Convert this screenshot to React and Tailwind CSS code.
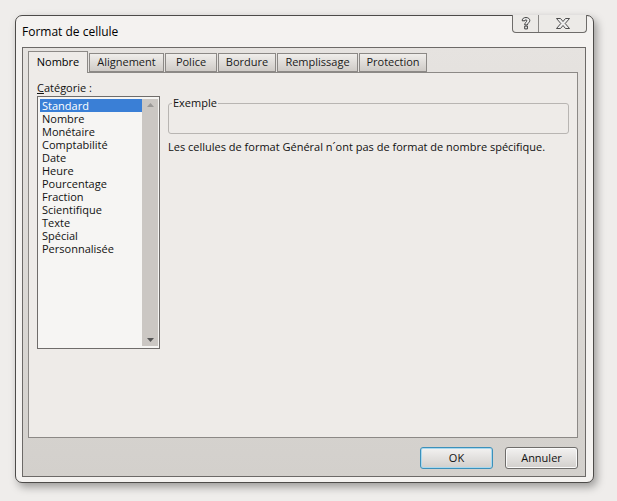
import React from 'react';

const categories = [
  'Standard',
  'Nombre',
  'Monétaire',
  'Comptabilité',
  'Date',
  'Heure',
  'Pourcentage',
  'Fraction',
  'Scientifique',
  'Texte',
  'Spécial',
  'Personnalisée',
];

const tabs = ['Nombre', 'Alignement', 'Police', 'Bordure', 'Remplissage', 'Protection'];
const tabWidths = ['w-[60px]', 'w-[75px]', 'w-[52px]', 'w-[58px]', 'w-[81px]', 'w-[68px]'];

const font = { fontFamily: '"Open Sans", "Noto Sans", sans-serif' };

const App = () => {
  return (
    <div
      className="w-[617px] h-[501px] bg-[#efedeb] pt-[15px] pl-[15px] text-[11px] text-[#111]"
      style={font}
    >
      {/* --- WINDOW --- */}
      <div className="relative w-[579px] h-[468px] rounded-[7px] border border-[#4d4b49] bg-[#f4f2f0] shadow-[3px_4px_8px_rgba(0,0,0,0.35)] flex flex-col">
        {/* caption buttons */}
        <div className="absolute top-[-1px] right-[6px] flex h-[18px] border border-t-0 border-[#6e6c6a] rounded-b-[4px] bg-[#eceae7] overflow-hidden">
          <div className="w-[26px] flex items-center justify-center border-r border-[#8a8886]">
            <svg width="10" height="13" viewBox="0 0 9 12">
              <path d="M1 3.5 C1 1.2 2.6 0.5 4.5 0.5 C6.6 0.5 8 1.6 8 3.3 C8 5 6 5.5 5.8 7.3 L3.3 7.3 C3.3 5.2 5.2 4.6 5.2 3.5 C5.2 2.8 4.9 2.5 4.4 2.5 C3.8 2.5 3.6 3 3.6 3.5 Z M3.3 8.4 L5.8 8.4 L5.8 11 L3.3 11 Z" fill="#eeeeee" stroke="#3c3c3c" strokeWidth="0.9" />
            </svg>
          </div>
          <div className="w-[47px] flex items-center justify-center">
            <svg width="14" height="11" viewBox="0 0 14 11">
              <path d="M0.5 0.5 L4.5 0.5 L7 3.5 L9.5 0.5 L13.5 0.5 L9.2 5.5 L13.5 10.5 L9.5 10.5 L7 7.5 L4.5 10.5 L0.5 10.5 L4.8 5.5 Z" fill="#eeeeee" stroke="#3c3c3c" strokeWidth="0.9" />
            </svg>
          </div>
        </div>

        {/* title */}
        <div className="h-[31px] pl-[6px] pt-[7px] text-[12px] text-black">Format de cellule</div>

        {/* --- CLIENT FRAME --- */}
        <div className="ml-[6px] mr-[7px] mb-[5px] flex-1 border border-[#6c6967] bg-gradient-to-b from-[#e6e3e0] to-[#d3d0cc] flex flex-col pl-[5px] pr-[7px] pt-[2px]">
          {/* tabs */}
          <div className="flex items-end h-[22px] relative z-10">
            {tabs.map((t, i) =>
              i === 0 ? (
                <div
                  key={t}
                  className={`${tabWidths[i]} h-[22px] -mb-px bg-[#eeebe8] border border-b-0 border-[#8c8986] flex items-center justify-center font-medium text-[11px] text-black`}
                >
                  {t}
                </div>
              ) : (
                <div
                  key={t}
                  className={`${tabWidths[i]} h-[19px] ml-[1px] border border-[#8c8986] bg-gradient-to-b from-[#f0eeeb] to-[#cfcbc7] flex items-center justify-center font-medium text-[11px] text-[#1a1a1a]`}
                >
                  {t}
                </div>
              )
            )}
          </div>

          {/* panel */}
          <div className="h-[366px] border border-[#8c8986] bg-[#eeebe8] flex px-[8px] pt-[9px] gap-[8px] font-medium">
            {/* category list */}
            <div className="flex flex-col w-[123px]">
              <div className="h-[14px] leading-[12px] text-[11px]">
                <span className="underline">C</span>atégorie :
              </div>
              <div className="h-[253px] border border-[#6f6c6a] bg-[#f6f5f3] flex p-[2px] pr-[1px]">
                <div className="flex-1 flex flex-col">
                  {categories.map((c, i) => (
                    <div
                      key={c}
                      className={
                        i === 0
                          ? 'h-[13px] leading-[13px] pl-[2px] bg-[#3a7fd6] text-white'
                          : 'h-[13px] leading-[13px] pl-[2px]'
                      }
                    >
                      {c}
                    </div>
                  ))}
                </div>
                <div className="w-[16px] bg-[#cbc7c3] flex flex-col justify-between items-center py-[4px]">
                  <svg width="7" height="4" viewBox="0 0 7 4">
                    <path d="M0 4 L3.5 0 L7 4 Z" fill="#9a9896" />
                  </svg>
                  <svg width="7" height="4" viewBox="0 0 7 4">
                    <path d="M0 0 L7 0 L3.5 4 Z" fill="#555" />
                  </svg>
                </div>
              </div>
            </div>

            {/* example + description */}
            <div className="flex-1 flex flex-col pt-[21px]">
              <div className="relative h-[31px] border border-[#b8b5b2] rounded-[3px]">
                <span className="absolute -top-[9px] left-[3px] bg-[#eeebe8] px-[1px] leading-[16px] text-[11px]">
                  Exemple
                </span>
              </div>
              <div className="mt-[5px] text-[11px]">
                Les cellules de format Général n´ont pas de format de nombre spécifique.
              </div>
            </div>
          </div>

          {/* buttons */}
          <div className="flex justify-end gap-[12px] mt-[9px]">
            <button className="w-[73px] h-[22px] rounded-[3px] border border-[#3c90ba] bg-gradient-to-b from-[#f3f2f1] to-[#d2cfcc] shadow-[inset_0_0_0_1px_#a8d8ee] text-[11px] font-medium">
              OK
            </button>
            <button className="w-[73px] h-[22px] rounded-[3px] border border-[#6f6d6b] bg-gradient-to-b from-[#f3f2f1] to-[#d2cfcc] shadow-[inset_0_0_0_1px_#fafafa] text-[11px] font-medium">
              Annuler
            </button>
          </div>
        </div>
      </div>
    </div>
  );
};

export default App;
